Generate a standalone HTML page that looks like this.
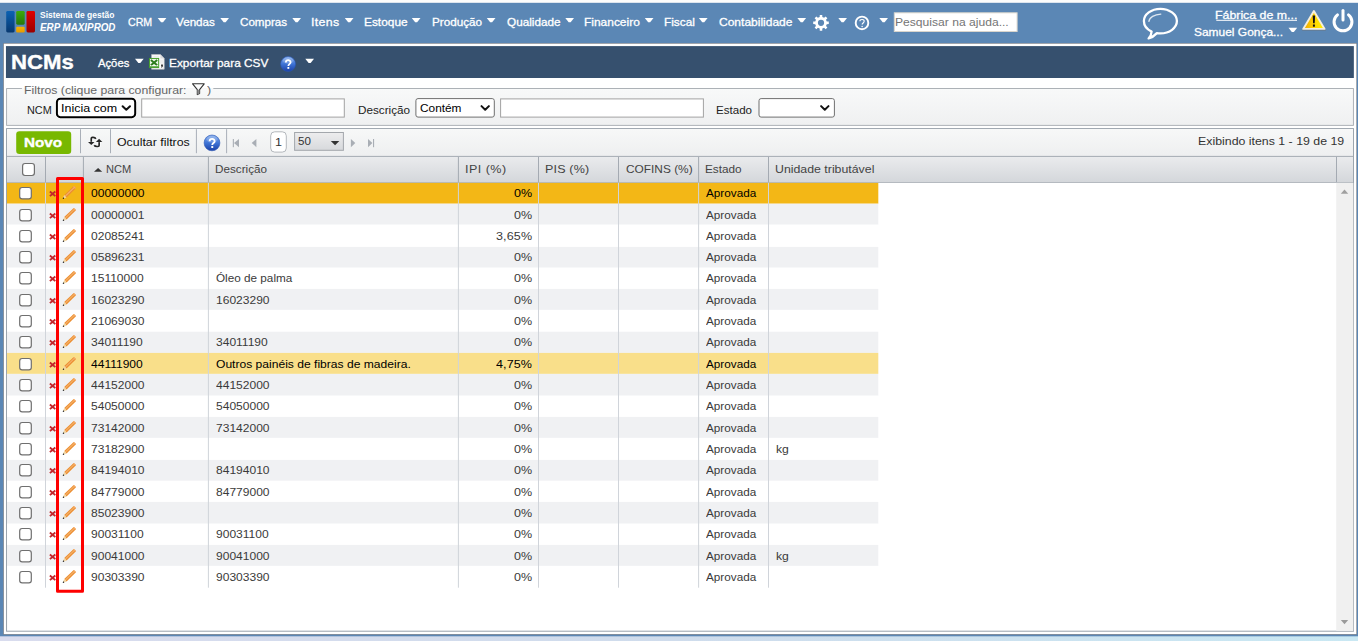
<!DOCTYPE html>
<html lang="pt-br"><head><meta charset="utf-8"><title>NCMs - ERP MAXIPROD</title>
<style>
html,body{margin:0;padding:0}
body{width:1358px;height:641px;overflow:hidden;position:relative;background:#5b87b5;font-family:"Liberation Sans", sans-serif}
#bg{position:absolute;left:0;top:0;width:1358px;height:641px;display:block}
.t{position:absolute;white-space:pre;font-family:"Liberation Sans", sans-serif}
</style></head><body>
<svg id="bg" width="1358" height="641" viewBox="0 0 1358 641">
<defs>
<linearGradient id="gB" x1="0" y1="0" x2="0" y2="1"><stop offset="0" stop-color="#0b62b4"/><stop offset="1" stop-color="#08386f"/></linearGradient>
<linearGradient id="gG" x1="0" y1="0" x2="0" y2="1"><stop offset="0" stop-color="#3cab0a"/><stop offset="1" stop-color="#27780a"/></linearGradient>
<linearGradient id="gY" x1="0" y1="0" x2="0" y2="1"><stop offset="0" stop-color="#f6b400"/><stop offset="1" stop-color="#e79a00"/></linearGradient>
<linearGradient id="gR" x1="0" y1="0" x2="0" y2="1"><stop offset="0" stop-color="#e00000"/><stop offset="1" stop-color="#9a0000"/></linearGradient>
<linearGradient id="gF" x1="0" y1="0" x2="0" y2="1"><stop offset="0" stop-color="#f8f9f9"/><stop offset="1" stop-color="#eff0f1"/></linearGradient>
<linearGradient id="gT" x1="0" y1="0" x2="0" y2="1"><stop offset="0" stop-color="#f7f8f8"/><stop offset="1" stop-color="#eeeff0"/></linearGradient>
<linearGradient id="gH" x1="0" y1="0" x2="0" y2="1"><stop offset="0" stop-color="#eaebed"/><stop offset="1" stop-color="#d4d7db"/></linearGradient>
<linearGradient id="gS" x1="0" y1="0" x2="0" y2="1"><stop offset="0" stop-color="#ededee"/><stop offset="1" stop-color="#d7d9dc"/></linearGradient>
<linearGradient id="gBot" x1="0" y1="0" x2="1" y2="0"><stop offset="0" stop-color="#d9dcee"/><stop offset="0.5" stop-color="#cfdcec"/><stop offset="1" stop-color="#c9e8f3"/></linearGradient>
<linearGradient id="gQ" x1="0" y1="0" x2="0" y2="1"><stop offset="0" stop-color="#86afee"/><stop offset="0.5" stop-color="#3f74d6"/><stop offset="1" stop-color="#1b40a6"/></linearGradient>
<linearGradient id="gW" x1="0" y1="0" x2="1" y2="0"><stop offset="0" stop-color="#f2a500"/><stop offset="0.55" stop-color="#ffd800"/><stop offset="1" stop-color="#fff200"/></linearGradient>
</defs>
<rect x="0" y="0" width="1358" height="641" fill="#5b87b5"/>
<rect x="0" y="0" width="1358" height="2.8" fill="#fdfdfc"/>
<rect x="0" y="633.5" width="1358" height="3.2" fill="#5b87b5"/>
<rect x="0" y="636.3" width="1358" height="4.7" fill="url(#gBot)"/>
<rect x="3.2" y="43.1" width="1353.7" height="591.6" fill="#7d7f84"/>
<rect x="3.85" y="43.7" width="1352.5" height="590.4" fill="#ffffff"/>
<rect x="6.2" y="10.9" width="8.4" height="21.6" rx="1.4" fill="url(#gB)"/>
<rect x="16.2" y="10.9" width="8.5" height="13.8" rx="1.4" fill="url(#gG)"/>
<rect x="16.2" y="26.7" width="8.5" height="5.8" rx="1.2" fill="url(#gY)"/>
<rect x="26.5" y="10.9" width="8.5" height="21.6" rx="1.4" fill="url(#gR)"/>
<g transform="translate(158,18)"><path d="M-0.3 0.05 L8.4 0.05 L5.05 4.3 L3.05 4.3 Z" fill="#fff"/></g>
<g transform="translate(220.6,18)"><path d="M-0.3 0.05 L8.4 0.05 L5.05 4.3 L3.05 4.3 Z" fill="#fff"/></g>
<g transform="translate(292.6,18)"><path d="M-0.3 0.05 L8.4 0.05 L5.05 4.3 L3.05 4.3 Z" fill="#fff"/></g>
<g transform="translate(345.1,18)"><path d="M-0.3 0.05 L8.4 0.05 L5.05 4.3 L3.05 4.3 Z" fill="#fff"/></g>
<g transform="translate(412.1,18)"><path d="M-0.3 0.05 L8.4 0.05 L5.05 4.3 L3.05 4.3 Z" fill="#fff"/></g>
<g transform="translate(487.1,18)"><path d="M-0.3 0.05 L8.4 0.05 L5.05 4.3 L3.05 4.3 Z" fill="#fff"/></g>
<g transform="translate(565.6,18)"><path d="M-0.3 0.05 L8.4 0.05 L5.05 4.3 L3.05 4.3 Z" fill="#fff"/></g>
<g transform="translate(645.1,18)"><path d="M-0.3 0.05 L8.4 0.05 L5.05 4.3 L3.05 4.3 Z" fill="#fff"/></g>
<g transform="translate(699.2,18)"><path d="M-0.3 0.05 L8.4 0.05 L5.05 4.3 L3.05 4.3 Z" fill="#fff"/></g>
<g transform="translate(797.7,18)"><path d="M-0.3 0.05 L8.4 0.05 L5.05 4.3 L3.05 4.3 Z" fill="#fff"/></g>
<g transform="translate(838.6,18)"><path d="M-0.3 0.05 L8.4 0.05 L5.05 4.3 L3.05 4.3 Z" fill="#fff"/></g>
<g transform="translate(879.6,18)"><path d="M-0.3 0.05 L8.4 0.05 L5.05 4.3 L3.05 4.3 Z" fill="#fff"/></g>
<path d="M819.76 15.05 L822.24 15.05 L822.33 17.10 L824.12 17.84 L825.64 16.46 L827.39 18.21 L826.01 19.73 L826.75 21.52 L828.80 21.61 L828.80 24.09 L826.75 24.18 L826.01 25.97 L827.39 27.49 L825.64 29.24 L824.12 27.86 L822.33 28.60 L822.24 30.65 L819.76 30.65 L819.67 28.60 L817.88 27.86 L816.36 29.24 L814.61 27.49 L815.99 25.97 L815.25 24.18 L813.20 24.09 L813.20 21.61 L815.25 21.52 L815.99 19.73 L814.61 18.21 L816.36 16.46 L817.88 17.84 L819.67 17.10 Z M824.10 22.85 A3.1 3.1 0 1 0 817.90 22.85 A3.1 3.1 0 1 0 824.10 22.85 Z" fill="#fff" fill-rule="evenodd"/>
<circle cx="862" cy="22.9" r="6.3" fill="none" stroke="#fff" stroke-width="1.9"/>
<path d="M859.9 21.3 C859.9 18.9 864.2 18.9 864.2 21.3 C864.2 22.9 862.1 23.0 862.1 24.6" fill="none" stroke="#fff" stroke-width="1.1"/><circle cx="862.1" cy="26.4" r="0.75" fill="#fff"/>
<rect x="894.3" y="12.8" width="122.8" height="18.7" fill="#fff" stroke="#d9d5cd" stroke-width="1"/>
<path d="M1151.6 31.6 C1146.6 29.3 1143.9 25.5 1143.9 21.1 C1143.9 14.3 1151.3 8.8 1160.4 8.8 C1169.5 8.8 1176.9 14.3 1176.9 21.1 C1176.9 27.9 1169.5 33.4 1160.4 33.4 C1159.2 33.4 1158.0 33.3 1156.9 33.1 C1154.6 35.6 1151.6 37.6 1148.6 38.4 C1150.4 36.4 1151.6 34.0 1151.6 31.6 Z" fill="none" stroke="#fff" stroke-width="2.3" stroke-linejoin="round"/>
<path d="M1148.9 21.4 C1149.3 17.4 1154.5 14.4 1160.8 14.1" fill="none" stroke="#fff" stroke-opacity=".8" stroke-width="1.3" stroke-linecap="round"/>
<rect x="1216.3" y="19.8" width="80.7" height="1" fill="#fff"/>
<g transform="translate(1288.8,27.8)"><path d="M-0.3 0.05 L8.4 0.05 L5.05 4.3 L3.05 4.3 Z" fill="#fff"/></g>
<path d="M1302.4 29.3 L1325.6 29.3 L1325.9 30.6 L1302.1 30.6 Z" fill="#6f7378" opacity=".85"/>
<path d="M1313.9 11.0 L1324.6 28.9 L1303.2 28.9 Z" fill="url(#gW)" stroke="#f4eedd" stroke-width="1.9" stroke-linejoin="round"/>
<path d="M1312.7 15.4 L1315.1 15.4 L1314.7 23.3 L1313.1 23.3 Z" fill="#111"/><rect x="1312.9" y="24.5" width="2" height="2.2" fill="#111"/>
<path d="M1348.51 14.85 A8.95 8.95 0 1 1 1337.49 14.85" fill="none" stroke="#fff" stroke-width="3" stroke-linecap="round"/>
<path d="M1343 10.6 L1343 19.9" stroke="#fff" stroke-width="3" stroke-linecap="round"/>
<rect x="5.95" y="46.1" width="1347.9" height="31.9" fill="#36506e"/>
<g transform="translate(135.3,58.7)"><path d="M-0.3 0.05 L8.4 0.05 L5.05 4.3 L3.05 4.3 Z" fill="#fff"/></g>
<g transform="translate(305.6,58.7)"><path d="M-0.3 0.05 L8.4 0.05 L5.05 4.3 L3.05 4.3 Z" fill="#fff"/></g>
<path d="M151.6 54.5 L160.4 54.5 L164.2 58.4 L164.2 69.2 L151.6 69.2 Z" fill="#fbfbfb" stroke="#b9bcc0" stroke-width=".7"/>
<path d="M160.4 54.5 L160.4 58.4 L164.2 58.4 Z" fill="#d9dadc"/>
<rect x="153.2" y="55.8" width="6" height="1.6" fill="#ececec"/>
<rect x="159.6" y="59.6" width="3.4" height="4.2" fill="#ededed"/>
<path d="M161.1 64.4 L162.9 64.4 L162.9 66.2 L162.0 67.5 L161.0 67.5 L161.7 66.3 L161.1 66.3 Z" fill="#2a2a2a"/>
<rect x="149.45" y="58.45" width="9.2" height="9.1" fill="#eef7ea" stroke="#46a02c" stroke-width="1"/>
<path d="M150.9 59.9 L157.2 65.2 M157.2 59.9 L150.9 65.2" stroke="#2c7c1d" stroke-width="1.9"/>
<rect x="150" y="65.6" width="8.1" height="0.7" fill="#ffffff"/>
<rect x="150" y="66.3" width="8.1" height="0.9" fill="#3c9526"/>
<circle cx="288.1" cy="64.0" r="7.5" fill="url(#gQ)" stroke="#2a56b4" stroke-width=".6"/>
<ellipse cx="288.1" cy="60.625" rx="5.25" ry="3.15" fill="#fff" opacity=".18"/>
<g transform="translate(288.1,64.0) scale(0.8333333333333334)"><path d="M-2.7 -1.9 C-2.7 -5.4 3.0 -5.4 3.0 -2.0 C3.0 0.2 0.3 0.2 0.3 2.3" fill="none" stroke="#fff" stroke-width="2.1"/><rect x="-0.8" y="3.6" width="2.2" height="2.2" fill="#fff"/></g>
<rect x="6.6" y="88.55" width="1346.8" height="36.8" fill="url(#gF)" stroke="#a4a9af" stroke-width="0.9"/>
<rect x="21.9" y="87.5" width="191.4" height="1.4" fill="#ffffff"/>
<rect x="21.9" y="88.9" width="191.4" height="1" fill="#f8f8f8"/>
<path d="M192.6 83.8 L204.2 83.8 L199.6 89.6 L199.6 93.6 L197.3 94.6 L197.3 89.6 Z" fill="#fdfdfd" stroke="#333" stroke-width="1.1" stroke-linejoin="round"/>
<path d="M197.4 89.8 L199.5 89.8 L199.5 93.5 L197.4 94.4 Z" fill="#888"/>
<rect x="56.9" y="98.75" width="78.3" height="18.4" rx="3.6" fill="#fff" stroke="#fff" stroke-width="3.4"/>
<rect x="56.9" y="98.75" width="78.3" height="18.4" rx="3.4" fill="#fff" stroke="#000" stroke-width="2"/>
<g transform="translate(121.7,105.2)"><path d="M0.9 1 L4.6 4.6 L8.3 1" fill="none" stroke="#111" stroke-width="2" stroke-linecap="round" stroke-linejoin="round"/></g>
<rect x="141.7" y="98.9" width="202.6" height="18.2" fill="#fff" stroke="#a2a2a2" stroke-width="1"/>
<rect x="415.9" y="98.6" width="78.4" height="18.5" rx="2.1" fill="#fff" stroke="#6f6f6f" stroke-width="1"/>
<g transform="translate(480.6,105.1)"><path d="M0.9 1 L4.6 4.6 L8.3 1" fill="none" stroke="#111" stroke-width="2" stroke-linecap="round" stroke-linejoin="round"/></g>
<rect x="500.6" y="98.9" width="202.8" height="18.2" fill="#fff" stroke="#a2a2a2" stroke-width="1"/>
<rect x="759" y="98.6" width="75.4" height="18.5" rx="2.1" fill="#fff" stroke="#6f6f6f" stroke-width="1"/>
<g transform="translate(820.2,105.1)"><path d="M0.9 1 L4.6 4.6 L8.3 1" fill="none" stroke="#111" stroke-width="2" stroke-linecap="round" stroke-linejoin="round"/></g>
<rect x="6.55" y="128.6" width="1346.9" height="502.6" fill="#fff" stroke="#98a1ab" stroke-width="1"/>
<rect x="7" y="129.05" width="1346" height="27" fill="url(#gT)"/>
<rect x="16.2" y="131.3" width="55" height="22.7" rx="3.2" fill="#78b800"/>
<rect x="80.0" y="129.2" width="1" height="24" fill="#a9afb8"/>
<rect x="110.0" y="129.2" width="1" height="24" fill="#a9afb8"/>
<rect x="195.9" y="129.2" width="1" height="24" fill="#a9afb8"/>
<rect x="226.1" y="129.2" width="1" height="24" fill="#a9afb8"/>
<g fill="none" stroke="#ffffff" stroke-opacity=".7" stroke-width="3.2" stroke-linejoin="round"><path d="M95.8 138.9 C95.3 137.6 94.6 137.4 93.2 137.4 L92.4 137.4 C91.6 137.4 91.25 137.8 91.25 138.6 L91.25 142.2"/><path d="M94.2 145.3 C94.8 146.3 95.6 146.5 97 146.5 L98 146.5 C98.8 146.5 99.15 146.1 99.15 145.3 L99.15 141.6"/></g>
<g fill="none" stroke="#262626" stroke-width="1.7"><path d="M95.8 138.9 C95.3 137.6 94.6 137.4 93.2 137.4 L92.4 137.4 C91.6 137.4 91.25 137.8 91.25 138.6 L91.25 142.2"/><path d="M94.2 145.3 C94.8 146.3 95.6 146.5 97 146.5 L98 146.5 C98.8 146.5 99.15 146.1 99.15 145.3 L99.15 141.6"/></g>
<path d="M88 142 L94.5 142 L91.25 145 Z" fill="#262626" stroke="#fff" stroke-opacity=".6" stroke-width=".6" paint-order="stroke"/>
<path d="M95.9 141.9 L102.3 141.9 L99.1 138.8 Z" fill="#262626" stroke="#fff" stroke-opacity=".6" stroke-width=".6" paint-order="stroke"/>
<circle cx="212" cy="142.9" r="7.9" fill="url(#gQ)" stroke="#2a56b4" stroke-width=".6"/>
<ellipse cx="212" cy="139.345" rx="5.53" ry="3.318" fill="#fff" opacity=".18"/>
<g transform="translate(212,142.9) scale(0.8777777777777778)"><path d="M-2.7 -1.9 C-2.7 -5.4 3.0 -5.4 3.0 -2.0 C3.0 0.2 0.3 0.2 0.3 2.3" fill="none" stroke="#fff" stroke-width="2.1"/><rect x="-0.8" y="3.6" width="2.2" height="2.2" fill="#fff"/></g>
<rect x="232.8" y="139" width="1.1" height="8.2" fill="#a9aeb5"/><path d="M239 139 L239 147.2 L234 143.1 Z" fill="#a9aeb5"/>
<path d="M256.4 139 L256.4 147.2 L251.7 143.1 Z" fill="#a9aeb5"/>
<rect x="270.7" y="131.8" width="15.6" height="20.3" rx="4" fill="#fff" stroke="#b4b8bd" stroke-width="1"/>
<rect x="294.6" y="132.5" width="48.8" height="17.8" fill="url(#gS)" stroke="#a3a7ac" stroke-width="1"/>
<path d="M330.8 141.1 L339.3 141.1 L335.05 145.3 Z" fill="#333"/>
<path d="M350.9 139 L350.9 147.2 L355.3 143.1 Z" fill="#a9aeb5"/>
<path d="M368 139 L368 147.2 L372.4 143.1 Z" fill="#a9aeb5"/><rect x="373" y="139" width="1.1" height="8.2" fill="#a9aeb5"/>
<rect x="7" y="156.9" width="1346" height="25.2" fill="url(#gH)"/>
<rect x="7" y="155.9" width="1346" height="1" fill="#a4aab2"/>
<rect x="7" y="182.1" width="1346" height="0.8" fill="#a4aab2"/>
<rect x="45.0" y="156.9" width="1" height="25.3" fill="#a4aab2"/>
<rect x="82.9" y="156.9" width="1" height="25.3" fill="#a4aab2"/>
<rect x="207.9" y="156.9" width="1" height="25.3" fill="#a4aab2"/>
<rect x="457.9" y="156.9" width="1" height="25.3" fill="#a4aab2"/>
<rect x="538.0" y="156.9" width="1" height="25.3" fill="#a4aab2"/>
<rect x="618.0" y="156.9" width="1" height="25.3" fill="#a4aab2"/>
<rect x="698.1" y="156.9" width="1" height="25.3" fill="#a4aab2"/>
<rect x="768.0" y="156.9" width="1" height="25.3" fill="#a4aab2"/>
<rect x="1336.0" y="156.9" width="1" height="25.3" fill="#a4aab2"/>
<rect x="22.6" y="163.5" width="11.8" height="12" rx="2.4" fill="#fff" stroke="#6f6f6f" stroke-width="1.2"/>
<path d="M94 171.8 L102.2 171.8 L98.1 167.9 Z" fill="#333"/>
<rect x="7" y="182.90" width="871.3" height="20.80" fill="#f3b716"/>
<rect x="7" y="203.70" width="871.3" height="21.00" fill="#f0f1f3"/>
<rect x="7" y="224.70" width="871.3" height="22.20" fill="#ffffff"/>
<rect x="7" y="246.90" width="871.3" height="20.80" fill="#f0f1f3"/>
<rect x="7" y="267.70" width="871.3" height="21.20" fill="#ffffff"/>
<rect x="7" y="288.90" width="871.3" height="21.00" fill="#f0f1f3"/>
<rect x="7" y="309.90" width="871.3" height="21.80" fill="#ffffff"/>
<rect x="7" y="331.70" width="871.3" height="21.20" fill="#f0f1f3"/>
<rect x="7" y="352.90" width="871.3" height="21.00" fill="#f9df8a"/>
<rect x="7" y="373.90" width="871.3" height="21.80" fill="#f0f1f3"/>
<rect x="7" y="395.70" width="871.3" height="21.20" fill="#ffffff"/>
<rect x="7" y="416.90" width="871.3" height="21.00" fill="#f0f1f3"/>
<rect x="7" y="437.90" width="871.3" height="22.00" fill="#ffffff"/>
<rect x="7" y="459.90" width="871.3" height="20.90" fill="#f0f1f3"/>
<rect x="7" y="480.80" width="871.3" height="21.10" fill="#ffffff"/>
<rect x="7" y="501.90" width="871.3" height="21.80" fill="#f0f1f3"/>
<rect x="7" y="523.70" width="871.3" height="21.20" fill="#ffffff"/>
<rect x="7" y="544.90" width="871.3" height="21.00" fill="#f0f1f3"/>
<rect x="7" y="565.90" width="871.3" height="21.80" fill="#ffffff"/>
<rect x="45.0" y="182.9" width="1" height="404.80" fill="#d0d4da"/>
<rect x="82.9" y="182.9" width="1" height="404.80" fill="#d0d4da"/>
<rect x="207.9" y="182.9" width="1" height="404.80" fill="#d0d4da"/>
<rect x="457.9" y="182.9" width="1" height="404.80" fill="#d0d4da"/>
<rect x="538.0" y="182.9" width="1" height="404.80" fill="#d0d4da"/>
<rect x="618.0" y="182.9" width="1" height="404.80" fill="#d0d4da"/>
<rect x="698.1" y="182.9" width="1" height="404.80" fill="#d0d4da"/>
<rect x="768.0" y="182.9" width="1" height="404.80" fill="#d0d4da"/>
<g transform="translate(19.1,186.90)"><rect x="0.6" y="0.6" width="11.6" height="11.3" rx="2.4" ry="2.4" fill="#fff" stroke="#6f6f6f" stroke-width="1.2"/></g>
<g transform="translate(49.1,190.75)"><path d="M0.8 0.8 L6.2 5.4 M6.2 0.8 L0.8 5.4" stroke="#c3262c" stroke-width="1.9" stroke-linecap="butt" fill="none"/></g>
<g transform="translate(62.6,186.05)"><path d="M1.62 9.07 L10.84 0.11 L11.55 0.12 L13.15 1.78 L13.14 2.48 L3.92 11.44 Z" fill="#ec8f33"/>
 <path d="M2.35 9.82 L11.93 0.52 L12.59 1.20 L3.01 10.50 Z" fill="#f7bd7c" opacity=".8"/>
 <path d="M10.27 0.67 L10.84 0.11 L11.55 0.12 L13.15 1.78 L13.14 2.48 L12.57 3.04 Z" fill="#f4ad69" opacity=".85"/>
 <path d="M1.62 9.07 L3.92 11.44 L1.55 12.55 L0.55 11.45 Z" fill="#f0d5a2"/>
 <path d="M0.91 11.21 L1.75 12.08 L0.33 12.62 Z" fill="#1d1d1d"/>
 <circle cx="0.76" cy="12.20" r="0.62" fill="#1d1d1d"/></g>
<g transform="translate(19.1,208.90)"><rect x="0.6" y="0.6" width="11.6" height="11.3" rx="2.4" ry="2.4" fill="#fff" stroke="#6f6f6f" stroke-width="1.2"/></g>
<g transform="translate(49.1,212.75)"><path d="M0.8 0.8 L6.2 5.4 M6.2 0.8 L0.8 5.4" stroke="#c3262c" stroke-width="1.9" stroke-linecap="butt" fill="none"/></g>
<g transform="translate(62.6,208.05)"><path d="M1.62 9.07 L10.84 0.11 L11.55 0.12 L13.15 1.78 L13.14 2.48 L3.92 11.44 Z" fill="#ec8f33"/>
 <path d="M2.35 9.82 L11.93 0.52 L12.59 1.20 L3.01 10.50 Z" fill="#f7bd7c" opacity=".8"/>
 <path d="M10.27 0.67 L10.84 0.11 L11.55 0.12 L13.15 1.78 L13.14 2.48 L12.57 3.04 Z" fill="#f4ad69" opacity=".85"/>
 <path d="M1.62 9.07 L3.92 11.44 L1.55 12.55 L0.55 11.45 Z" fill="#f0d5a2"/>
 <path d="M0.91 11.21 L1.75 12.08 L0.33 12.62 Z" fill="#1d1d1d"/>
 <circle cx="0.76" cy="12.20" r="0.62" fill="#1d1d1d"/></g>
<g transform="translate(19.1,229.90)"><rect x="0.6" y="0.6" width="11.6" height="11.3" rx="2.4" ry="2.4" fill="#fff" stroke="#6f6f6f" stroke-width="1.2"/></g>
<g transform="translate(49.1,233.75)"><path d="M0.8 0.8 L6.2 5.4 M6.2 0.8 L0.8 5.4" stroke="#c3262c" stroke-width="1.9" stroke-linecap="butt" fill="none"/></g>
<g transform="translate(62.6,229.05)"><path d="M1.62 9.07 L10.84 0.11 L11.55 0.12 L13.15 1.78 L13.14 2.48 L3.92 11.44 Z" fill="#ec8f33"/>
 <path d="M2.35 9.82 L11.93 0.52 L12.59 1.20 L3.01 10.50 Z" fill="#f7bd7c" opacity=".8"/>
 <path d="M10.27 0.67 L10.84 0.11 L11.55 0.12 L13.15 1.78 L13.14 2.48 L12.57 3.04 Z" fill="#f4ad69" opacity=".85"/>
 <path d="M1.62 9.07 L3.92 11.44 L1.55 12.55 L0.55 11.45 Z" fill="#f0d5a2"/>
 <path d="M0.91 11.21 L1.75 12.08 L0.33 12.62 Z" fill="#1d1d1d"/>
 <circle cx="0.76" cy="12.20" r="0.62" fill="#1d1d1d"/></g>
<g transform="translate(19.1,250.90)"><rect x="0.6" y="0.6" width="11.6" height="11.3" rx="2.4" ry="2.4" fill="#fff" stroke="#6f6f6f" stroke-width="1.2"/></g>
<g transform="translate(49.1,254.75)"><path d="M0.8 0.8 L6.2 5.4 M6.2 0.8 L0.8 5.4" stroke="#c3262c" stroke-width="1.9" stroke-linecap="butt" fill="none"/></g>
<g transform="translate(62.6,250.05)"><path d="M1.62 9.07 L10.84 0.11 L11.55 0.12 L13.15 1.78 L13.14 2.48 L3.92 11.44 Z" fill="#ec8f33"/>
 <path d="M2.35 9.82 L11.93 0.52 L12.59 1.20 L3.01 10.50 Z" fill="#f7bd7c" opacity=".8"/>
 <path d="M10.27 0.67 L10.84 0.11 L11.55 0.12 L13.15 1.78 L13.14 2.48 L12.57 3.04 Z" fill="#f4ad69" opacity=".85"/>
 <path d="M1.62 9.07 L3.92 11.44 L1.55 12.55 L0.55 11.45 Z" fill="#f0d5a2"/>
 <path d="M0.91 11.21 L1.75 12.08 L0.33 12.62 Z" fill="#1d1d1d"/>
 <circle cx="0.76" cy="12.20" r="0.62" fill="#1d1d1d"/></g>
<g transform="translate(19.1,271.90)"><rect x="0.6" y="0.6" width="11.6" height="11.3" rx="2.4" ry="2.4" fill="#fff" stroke="#6f6f6f" stroke-width="1.2"/></g>
<g transform="translate(49.1,275.75)"><path d="M0.8 0.8 L6.2 5.4 M6.2 0.8 L0.8 5.4" stroke="#c3262c" stroke-width="1.9" stroke-linecap="butt" fill="none"/></g>
<g transform="translate(62.6,271.05)"><path d="M1.62 9.07 L10.84 0.11 L11.55 0.12 L13.15 1.78 L13.14 2.48 L3.92 11.44 Z" fill="#ec8f33"/>
 <path d="M2.35 9.82 L11.93 0.52 L12.59 1.20 L3.01 10.50 Z" fill="#f7bd7c" opacity=".8"/>
 <path d="M10.27 0.67 L10.84 0.11 L11.55 0.12 L13.15 1.78 L13.14 2.48 L12.57 3.04 Z" fill="#f4ad69" opacity=".85"/>
 <path d="M1.62 9.07 L3.92 11.44 L1.55 12.55 L0.55 11.45 Z" fill="#f0d5a2"/>
 <path d="M0.91 11.21 L1.75 12.08 L0.33 12.62 Z" fill="#1d1d1d"/>
 <circle cx="0.76" cy="12.20" r="0.62" fill="#1d1d1d"/></g>
<g transform="translate(19.1,293.90)"><rect x="0.6" y="0.6" width="11.6" height="11.3" rx="2.4" ry="2.4" fill="#fff" stroke="#6f6f6f" stroke-width="1.2"/></g>
<g transform="translate(49.1,297.75)"><path d="M0.8 0.8 L6.2 5.4 M6.2 0.8 L0.8 5.4" stroke="#c3262c" stroke-width="1.9" stroke-linecap="butt" fill="none"/></g>
<g transform="translate(62.6,293.05)"><path d="M1.62 9.07 L10.84 0.11 L11.55 0.12 L13.15 1.78 L13.14 2.48 L3.92 11.44 Z" fill="#ec8f33"/>
 <path d="M2.35 9.82 L11.93 0.52 L12.59 1.20 L3.01 10.50 Z" fill="#f7bd7c" opacity=".8"/>
 <path d="M10.27 0.67 L10.84 0.11 L11.55 0.12 L13.15 1.78 L13.14 2.48 L12.57 3.04 Z" fill="#f4ad69" opacity=".85"/>
 <path d="M1.62 9.07 L3.92 11.44 L1.55 12.55 L0.55 11.45 Z" fill="#f0d5a2"/>
 <path d="M0.91 11.21 L1.75 12.08 L0.33 12.62 Z" fill="#1d1d1d"/>
 <circle cx="0.76" cy="12.20" r="0.62" fill="#1d1d1d"/></g>
<g transform="translate(19.1,314.90)"><rect x="0.6" y="0.6" width="11.6" height="11.3" rx="2.4" ry="2.4" fill="#fff" stroke="#6f6f6f" stroke-width="1.2"/></g>
<g transform="translate(49.1,318.75)"><path d="M0.8 0.8 L6.2 5.4 M6.2 0.8 L0.8 5.4" stroke="#c3262c" stroke-width="1.9" stroke-linecap="butt" fill="none"/></g>
<g transform="translate(62.6,314.05)"><path d="M1.62 9.07 L10.84 0.11 L11.55 0.12 L13.15 1.78 L13.14 2.48 L3.92 11.44 Z" fill="#ec8f33"/>
 <path d="M2.35 9.82 L11.93 0.52 L12.59 1.20 L3.01 10.50 Z" fill="#f7bd7c" opacity=".8"/>
 <path d="M10.27 0.67 L10.84 0.11 L11.55 0.12 L13.15 1.78 L13.14 2.48 L12.57 3.04 Z" fill="#f4ad69" opacity=".85"/>
 <path d="M1.62 9.07 L3.92 11.44 L1.55 12.55 L0.55 11.45 Z" fill="#f0d5a2"/>
 <path d="M0.91 11.21 L1.75 12.08 L0.33 12.62 Z" fill="#1d1d1d"/>
 <circle cx="0.76" cy="12.20" r="0.62" fill="#1d1d1d"/></g>
<g transform="translate(19.1,335.90)"><rect x="0.6" y="0.6" width="11.6" height="11.3" rx="2.4" ry="2.4" fill="#fff" stroke="#6f6f6f" stroke-width="1.2"/></g>
<g transform="translate(49.1,339.75)"><path d="M0.8 0.8 L6.2 5.4 M6.2 0.8 L0.8 5.4" stroke="#c3262c" stroke-width="1.9" stroke-linecap="butt" fill="none"/></g>
<g transform="translate(62.6,335.05)"><path d="M1.62 9.07 L10.84 0.11 L11.55 0.12 L13.15 1.78 L13.14 2.48 L3.92 11.44 Z" fill="#ec8f33"/>
 <path d="M2.35 9.82 L11.93 0.52 L12.59 1.20 L3.01 10.50 Z" fill="#f7bd7c" opacity=".8"/>
 <path d="M10.27 0.67 L10.84 0.11 L11.55 0.12 L13.15 1.78 L13.14 2.48 L12.57 3.04 Z" fill="#f4ad69" opacity=".85"/>
 <path d="M1.62 9.07 L3.92 11.44 L1.55 12.55 L0.55 11.45 Z" fill="#f0d5a2"/>
 <path d="M0.91 11.21 L1.75 12.08 L0.33 12.62 Z" fill="#1d1d1d"/>
 <circle cx="0.76" cy="12.20" r="0.62" fill="#1d1d1d"/></g>
<g transform="translate(19.1,357.90)"><rect x="0.6" y="0.6" width="11.6" height="11.3" rx="2.4" ry="2.4" fill="#fff" stroke="#6f6f6f" stroke-width="1.2"/></g>
<g transform="translate(49.1,361.75)"><path d="M0.8 0.8 L6.2 5.4 M6.2 0.8 L0.8 5.4" stroke="#c3262c" stroke-width="1.9" stroke-linecap="butt" fill="none"/></g>
<g transform="translate(62.6,357.05)"><path d="M1.62 9.07 L10.84 0.11 L11.55 0.12 L13.15 1.78 L13.14 2.48 L3.92 11.44 Z" fill="#ec8f33"/>
 <path d="M2.35 9.82 L11.93 0.52 L12.59 1.20 L3.01 10.50 Z" fill="#f7bd7c" opacity=".8"/>
 <path d="M10.27 0.67 L10.84 0.11 L11.55 0.12 L13.15 1.78 L13.14 2.48 L12.57 3.04 Z" fill="#f4ad69" opacity=".85"/>
 <path d="M1.62 9.07 L3.92 11.44 L1.55 12.55 L0.55 11.45 Z" fill="#f0d5a2"/>
 <path d="M0.91 11.21 L1.75 12.08 L0.33 12.62 Z" fill="#1d1d1d"/>
 <circle cx="0.76" cy="12.20" r="0.62" fill="#1d1d1d"/></g>
<g transform="translate(19.1,378.90)"><rect x="0.6" y="0.6" width="11.6" height="11.3" rx="2.4" ry="2.4" fill="#fff" stroke="#6f6f6f" stroke-width="1.2"/></g>
<g transform="translate(49.1,382.75)"><path d="M0.8 0.8 L6.2 5.4 M6.2 0.8 L0.8 5.4" stroke="#c3262c" stroke-width="1.9" stroke-linecap="butt" fill="none"/></g>
<g transform="translate(62.6,378.05)"><path d="M1.62 9.07 L10.84 0.11 L11.55 0.12 L13.15 1.78 L13.14 2.48 L3.92 11.44 Z" fill="#ec8f33"/>
 <path d="M2.35 9.82 L11.93 0.52 L12.59 1.20 L3.01 10.50 Z" fill="#f7bd7c" opacity=".8"/>
 <path d="M10.27 0.67 L10.84 0.11 L11.55 0.12 L13.15 1.78 L13.14 2.48 L12.57 3.04 Z" fill="#f4ad69" opacity=".85"/>
 <path d="M1.62 9.07 L3.92 11.44 L1.55 12.55 L0.55 11.45 Z" fill="#f0d5a2"/>
 <path d="M0.91 11.21 L1.75 12.08 L0.33 12.62 Z" fill="#1d1d1d"/>
 <circle cx="0.76" cy="12.20" r="0.62" fill="#1d1d1d"/></g>
<g transform="translate(19.1,399.90)"><rect x="0.6" y="0.6" width="11.6" height="11.3" rx="2.4" ry="2.4" fill="#fff" stroke="#6f6f6f" stroke-width="1.2"/></g>
<g transform="translate(49.1,403.75)"><path d="M0.8 0.8 L6.2 5.4 M6.2 0.8 L0.8 5.4" stroke="#c3262c" stroke-width="1.9" stroke-linecap="butt" fill="none"/></g>
<g transform="translate(62.6,399.05)"><path d="M1.62 9.07 L10.84 0.11 L11.55 0.12 L13.15 1.78 L13.14 2.48 L3.92 11.44 Z" fill="#ec8f33"/>
 <path d="M2.35 9.82 L11.93 0.52 L12.59 1.20 L3.01 10.50 Z" fill="#f7bd7c" opacity=".8"/>
 <path d="M10.27 0.67 L10.84 0.11 L11.55 0.12 L13.15 1.78 L13.14 2.48 L12.57 3.04 Z" fill="#f4ad69" opacity=".85"/>
 <path d="M1.62 9.07 L3.92 11.44 L1.55 12.55 L0.55 11.45 Z" fill="#f0d5a2"/>
 <path d="M0.91 11.21 L1.75 12.08 L0.33 12.62 Z" fill="#1d1d1d"/>
 <circle cx="0.76" cy="12.20" r="0.62" fill="#1d1d1d"/></g>
<g transform="translate(19.1,421.90)"><rect x="0.6" y="0.6" width="11.6" height="11.3" rx="2.4" ry="2.4" fill="#fff" stroke="#6f6f6f" stroke-width="1.2"/></g>
<g transform="translate(49.1,425.75)"><path d="M0.8 0.8 L6.2 5.4 M6.2 0.8 L0.8 5.4" stroke="#c3262c" stroke-width="1.9" stroke-linecap="butt" fill="none"/></g>
<g transform="translate(62.6,421.05)"><path d="M1.62 9.07 L10.84 0.11 L11.55 0.12 L13.15 1.78 L13.14 2.48 L3.92 11.44 Z" fill="#ec8f33"/>
 <path d="M2.35 9.82 L11.93 0.52 L12.59 1.20 L3.01 10.50 Z" fill="#f7bd7c" opacity=".8"/>
 <path d="M10.27 0.67 L10.84 0.11 L11.55 0.12 L13.15 1.78 L13.14 2.48 L12.57 3.04 Z" fill="#f4ad69" opacity=".85"/>
 <path d="M1.62 9.07 L3.92 11.44 L1.55 12.55 L0.55 11.45 Z" fill="#f0d5a2"/>
 <path d="M0.91 11.21 L1.75 12.08 L0.33 12.62 Z" fill="#1d1d1d"/>
 <circle cx="0.76" cy="12.20" r="0.62" fill="#1d1d1d"/></g>
<g transform="translate(19.1,442.90)"><rect x="0.6" y="0.6" width="11.6" height="11.3" rx="2.4" ry="2.4" fill="#fff" stroke="#6f6f6f" stroke-width="1.2"/></g>
<g transform="translate(49.1,446.75)"><path d="M0.8 0.8 L6.2 5.4 M6.2 0.8 L0.8 5.4" stroke="#c3262c" stroke-width="1.9" stroke-linecap="butt" fill="none"/></g>
<g transform="translate(62.6,442.05)"><path d="M1.62 9.07 L10.84 0.11 L11.55 0.12 L13.15 1.78 L13.14 2.48 L3.92 11.44 Z" fill="#ec8f33"/>
 <path d="M2.35 9.82 L11.93 0.52 L12.59 1.20 L3.01 10.50 Z" fill="#f7bd7c" opacity=".8"/>
 <path d="M10.27 0.67 L10.84 0.11 L11.55 0.12 L13.15 1.78 L13.14 2.48 L12.57 3.04 Z" fill="#f4ad69" opacity=".85"/>
 <path d="M1.62 9.07 L3.92 11.44 L1.55 12.55 L0.55 11.45 Z" fill="#f0d5a2"/>
 <path d="M0.91 11.21 L1.75 12.08 L0.33 12.62 Z" fill="#1d1d1d"/>
 <circle cx="0.76" cy="12.20" r="0.62" fill="#1d1d1d"/></g>
<g transform="translate(19.1,463.90)"><rect x="0.6" y="0.6" width="11.6" height="11.3" rx="2.4" ry="2.4" fill="#fff" stroke="#6f6f6f" stroke-width="1.2"/></g>
<g transform="translate(49.1,467.75)"><path d="M0.8 0.8 L6.2 5.4 M6.2 0.8 L0.8 5.4" stroke="#c3262c" stroke-width="1.9" stroke-linecap="butt" fill="none"/></g>
<g transform="translate(62.6,463.05)"><path d="M1.62 9.07 L10.84 0.11 L11.55 0.12 L13.15 1.78 L13.14 2.48 L3.92 11.44 Z" fill="#ec8f33"/>
 <path d="M2.35 9.82 L11.93 0.52 L12.59 1.20 L3.01 10.50 Z" fill="#f7bd7c" opacity=".8"/>
 <path d="M10.27 0.67 L10.84 0.11 L11.55 0.12 L13.15 1.78 L13.14 2.48 L12.57 3.04 Z" fill="#f4ad69" opacity=".85"/>
 <path d="M1.62 9.07 L3.92 11.44 L1.55 12.55 L0.55 11.45 Z" fill="#f0d5a2"/>
 <path d="M0.91 11.21 L1.75 12.08 L0.33 12.62 Z" fill="#1d1d1d"/>
 <circle cx="0.76" cy="12.20" r="0.62" fill="#1d1d1d"/></g>
<g transform="translate(19.1,485.90)"><rect x="0.6" y="0.6" width="11.6" height="11.3" rx="2.4" ry="2.4" fill="#fff" stroke="#6f6f6f" stroke-width="1.2"/></g>
<g transform="translate(49.1,489.75)"><path d="M0.8 0.8 L6.2 5.4 M6.2 0.8 L0.8 5.4" stroke="#c3262c" stroke-width="1.9" stroke-linecap="butt" fill="none"/></g>
<g transform="translate(62.6,485.05)"><path d="M1.62 9.07 L10.84 0.11 L11.55 0.12 L13.15 1.78 L13.14 2.48 L3.92 11.44 Z" fill="#ec8f33"/>
 <path d="M2.35 9.82 L11.93 0.52 L12.59 1.20 L3.01 10.50 Z" fill="#f7bd7c" opacity=".8"/>
 <path d="M10.27 0.67 L10.84 0.11 L11.55 0.12 L13.15 1.78 L13.14 2.48 L12.57 3.04 Z" fill="#f4ad69" opacity=".85"/>
 <path d="M1.62 9.07 L3.92 11.44 L1.55 12.55 L0.55 11.45 Z" fill="#f0d5a2"/>
 <path d="M0.91 11.21 L1.75 12.08 L0.33 12.62 Z" fill="#1d1d1d"/>
 <circle cx="0.76" cy="12.20" r="0.62" fill="#1d1d1d"/></g>
<g transform="translate(19.1,506.90)"><rect x="0.6" y="0.6" width="11.6" height="11.3" rx="2.4" ry="2.4" fill="#fff" stroke="#6f6f6f" stroke-width="1.2"/></g>
<g transform="translate(49.1,510.75)"><path d="M0.8 0.8 L6.2 5.4 M6.2 0.8 L0.8 5.4" stroke="#c3262c" stroke-width="1.9" stroke-linecap="butt" fill="none"/></g>
<g transform="translate(62.6,506.05)"><path d="M1.62 9.07 L10.84 0.11 L11.55 0.12 L13.15 1.78 L13.14 2.48 L3.92 11.44 Z" fill="#ec8f33"/>
 <path d="M2.35 9.82 L11.93 0.52 L12.59 1.20 L3.01 10.50 Z" fill="#f7bd7c" opacity=".8"/>
 <path d="M10.27 0.67 L10.84 0.11 L11.55 0.12 L13.15 1.78 L13.14 2.48 L12.57 3.04 Z" fill="#f4ad69" opacity=".85"/>
 <path d="M1.62 9.07 L3.92 11.44 L1.55 12.55 L0.55 11.45 Z" fill="#f0d5a2"/>
 <path d="M0.91 11.21 L1.75 12.08 L0.33 12.62 Z" fill="#1d1d1d"/>
 <circle cx="0.76" cy="12.20" r="0.62" fill="#1d1d1d"/></g>
<g transform="translate(19.1,527.90)"><rect x="0.6" y="0.6" width="11.6" height="11.3" rx="2.4" ry="2.4" fill="#fff" stroke="#6f6f6f" stroke-width="1.2"/></g>
<g transform="translate(49.1,531.75)"><path d="M0.8 0.8 L6.2 5.4 M6.2 0.8 L0.8 5.4" stroke="#c3262c" stroke-width="1.9" stroke-linecap="butt" fill="none"/></g>
<g transform="translate(62.6,527.05)"><path d="M1.62 9.07 L10.84 0.11 L11.55 0.12 L13.15 1.78 L13.14 2.48 L3.92 11.44 Z" fill="#ec8f33"/>
 <path d="M2.35 9.82 L11.93 0.52 L12.59 1.20 L3.01 10.50 Z" fill="#f7bd7c" opacity=".8"/>
 <path d="M10.27 0.67 L10.84 0.11 L11.55 0.12 L13.15 1.78 L13.14 2.48 L12.57 3.04 Z" fill="#f4ad69" opacity=".85"/>
 <path d="M1.62 9.07 L3.92 11.44 L1.55 12.55 L0.55 11.45 Z" fill="#f0d5a2"/>
 <path d="M0.91 11.21 L1.75 12.08 L0.33 12.62 Z" fill="#1d1d1d"/>
 <circle cx="0.76" cy="12.20" r="0.62" fill="#1d1d1d"/></g>
<g transform="translate(19.1,549.90)"><rect x="0.6" y="0.6" width="11.6" height="11.3" rx="2.4" ry="2.4" fill="#fff" stroke="#6f6f6f" stroke-width="1.2"/></g>
<g transform="translate(49.1,553.75)"><path d="M0.8 0.8 L6.2 5.4 M6.2 0.8 L0.8 5.4" stroke="#c3262c" stroke-width="1.9" stroke-linecap="butt" fill="none"/></g>
<g transform="translate(62.6,549.05)"><path d="M1.62 9.07 L10.84 0.11 L11.55 0.12 L13.15 1.78 L13.14 2.48 L3.92 11.44 Z" fill="#ec8f33"/>
 <path d="M2.35 9.82 L11.93 0.52 L12.59 1.20 L3.01 10.50 Z" fill="#f7bd7c" opacity=".8"/>
 <path d="M10.27 0.67 L10.84 0.11 L11.55 0.12 L13.15 1.78 L13.14 2.48 L12.57 3.04 Z" fill="#f4ad69" opacity=".85"/>
 <path d="M1.62 9.07 L3.92 11.44 L1.55 12.55 L0.55 11.45 Z" fill="#f0d5a2"/>
 <path d="M0.91 11.21 L1.75 12.08 L0.33 12.62 Z" fill="#1d1d1d"/>
 <circle cx="0.76" cy="12.20" r="0.62" fill="#1d1d1d"/></g>
<g transform="translate(19.1,570.90)"><rect x="0.6" y="0.6" width="11.6" height="11.3" rx="2.4" ry="2.4" fill="#fff" stroke="#6f6f6f" stroke-width="1.2"/></g>
<g transform="translate(49.1,574.75)"><path d="M0.8 0.8 L6.2 5.4 M6.2 0.8 L0.8 5.4" stroke="#c3262c" stroke-width="1.9" stroke-linecap="butt" fill="none"/></g>
<g transform="translate(62.6,570.05)"><path d="M1.62 9.07 L10.84 0.11 L11.55 0.12 L13.15 1.78 L13.14 2.48 L3.92 11.44 Z" fill="#ec8f33"/>
 <path d="M2.35 9.82 L11.93 0.52 L12.59 1.20 L3.01 10.50 Z" fill="#f7bd7c" opacity=".8"/>
 <path d="M10.27 0.67 L10.84 0.11 L11.55 0.12 L13.15 1.78 L13.14 2.48 L12.57 3.04 Z" fill="#f4ad69" opacity=".85"/>
 <path d="M1.62 9.07 L3.92 11.44 L1.55 12.55 L0.55 11.45 Z" fill="#f0d5a2"/>
 <path d="M0.91 11.21 L1.75 12.08 L0.33 12.62 Z" fill="#1d1d1d"/>
 <circle cx="0.76" cy="12.20" r="0.62" fill="#1d1d1d"/></g>
<rect x="1336.2" y="182.9" width="17.1" height="447.9" fill="#f0f0f0"/>
<path d="M1340.8 193.7 L1348.2 193.7 L1344.5 189.5 Z" fill="#a0a0a0"/>
<path d="M1340.8 620 L1348.2 620 L1344.5 624.3 Z" fill="#9a9a9a"/>
<rect x="57.5" y="178.5" width="25" height="412.7" fill="none" stroke="#fe0000" stroke-width="3" stroke-linejoin="round"/>
</svg>
<span class="t" style="left:39.91px;top:8.60px;line-height:12px;color:#fff;letter-spacing:0.000px;transform:scaleX(0.9637);transform-origin:0 0;font-size:8.8px;font-weight:700;">Sistema de gestão</span>
<span class="t" style="left:39.85px;top:20.00px;line-height:15px;color:#fff;letter-spacing:0.000px;transform:scaleX(0.9092);transform-origin:0 0;font-size:10.8px;font-weight:700;font-style:italic;">ERP MAXIPROD</span>
<span class="t" style="left:128.01px;top:15.10px;line-height:15px;color:#fff;letter-spacing:0.000px;transform:scaleX(0.9332);transform-origin:0 0;-webkit-text-stroke:0.3px #fff;font-size:11.4px;font-weight:400;">CRM</span>
<span class="t" style="left:176.32px;top:15.10px;line-height:15px;color:#fff;letter-spacing:0.000px;transform:scaleX(1.0243);transform-origin:0 0;-webkit-text-stroke:0.3px #fff;font-size:11.4px;font-weight:400;">Vendas</span>
<span class="t" style="left:240.28px;top:15.10px;line-height:15px;color:#fff;letter-spacing:0.000px;transform:scaleX(1.0192);transform-origin:0 0;-webkit-text-stroke:0.3px #fff;font-size:11.4px;font-weight:400;">Compras</span>
<span class="t" style="left:311.38px;top:15.10px;line-height:15px;color:#fff;letter-spacing:0.285px;transform:scaleX(1.0900);transform-origin:0 0;-webkit-text-stroke:0.3px #fff;font-size:11.4px;font-weight:400;">Itens</span>
<span class="t" style="left:363.51px;top:15.10px;line-height:15px;color:#fff;letter-spacing:0.000px;transform:scaleX(1.0430);transform-origin:0 0;-webkit-text-stroke:0.3px #fff;font-size:11.4px;font-weight:400;">Estoque</span>
<span class="t" style="left:431.53px;top:15.10px;line-height:15px;color:#fff;letter-spacing:-0.000px;transform:scaleX(1.0263);transform-origin:0 0;-webkit-text-stroke:0.3px #fff;font-size:11.4px;font-weight:400;">Produção</span>
<span class="t" style="left:506.69px;top:15.10px;line-height:15px;color:#fff;letter-spacing:0.000px;transform:scaleX(1.0313);transform-origin:0 0;-webkit-text-stroke:0.3px #fff;font-size:11.4px;font-weight:400;">Qualidade</span>
<span class="t" style="left:584.10px;top:15.10px;line-height:15px;color:#fff;letter-spacing:0.000px;transform:scaleX(1.0492);transform-origin:0 0;-webkit-text-stroke:0.3px #fff;font-size:11.4px;font-weight:400;">Financeiro</span>
<span class="t" style="left:663.51px;top:15.10px;line-height:15px;color:#fff;letter-spacing:0.000px;transform:scaleX(1.0387);transform-origin:0 0;-webkit-text-stroke:0.3px #fff;font-size:11.4px;font-weight:400;">Fiscal</span>
<span class="t" style="left:719.27px;top:15.10px;line-height:15px;color:#fff;letter-spacing:0.000px;transform:scaleX(1.0549);transform-origin:0 0;-webkit-text-stroke:0.3px #fff;font-size:11.4px;font-weight:400;">Contabilidade</span>
<span class="t" style="left:895.49px;top:15.20px;line-height:15px;color:#757575;letter-spacing:0.000px;transform:scaleX(1.0626);transform-origin:0 0;font-size:11.4px;font-weight:400;">Pesquisar na ajuda...</span>
<span class="t" style="left:1215.47px;top:7.50px;line-height:15px;color:#fff;letter-spacing:0.000px;transform:scaleX(1.0835);transform-origin:0 0;-webkit-text-stroke:0.3px #fff;font-size:11.4px;font-weight:400;">Fábrica de m...</span>
<span class="t" style="left:1194.01px;top:24.80px;line-height:15px;color:#fff;letter-spacing:0.000px;transform:scaleX(1.0490);transform-origin:0 0;-webkit-text-stroke:0.3px #fff;font-size:11.4px;font-weight:400;">Samuel Gonça...</span>
<span class="t" style="left:11.10px;top:48.00px;line-height:28px;color:#fff;letter-spacing:0.000px;transform:scaleX(1.0648);transform-origin:0 0;-webkit-text-stroke:0.4px #fff;font-size:20.8px;font-weight:700;">NCMs</span>
<span class="t" style="left:98.34px;top:55.70px;line-height:15px;color:#fff;letter-spacing:0.000px;transform:scaleX(0.9873);transform-origin:0 0;-webkit-text-stroke:0.3px #fff;font-size:11.4px;font-weight:400;">Ações</span>
<span class="t" style="left:169.01px;top:55.70px;line-height:15px;color:#fff;letter-spacing:0.000px;transform:scaleX(1.0393);transform-origin:0 0;-webkit-text-stroke:0.3px #fff;font-size:11.4px;font-weight:400;">Exportar para CSV</span>
<span class="t" style="left:23.58px;top:82.60px;line-height:15px;color:#666;letter-spacing:0.000px;transform:scaleX(1.0684);transform-origin:0 0;font-size:11.5px;font-weight:400;">Filtros (clique para configurar:</span>
<span class="t" style="left:207.33px;top:82.60px;line-height:15px;color:#666;letter-spacing:0.000px;transform:scaleX(1.0900);transform-origin:0 0;font-size:11.5px;font-weight:400;">)</span>
<span class="t" style="left:26.60px;top:103.10px;line-height:15px;color:#222;letter-spacing:0.000px;transform:scaleX(0.9438);transform-origin:0 0;font-size:11.5px;font-weight:400;">NCM</span>
<span class="t" style="left:60.59px;top:100.00px;line-height:16px;color:#000;letter-spacing:0.000px;transform:scaleX(1.0769);transform-origin:0 0;font-size:11.6px;font-weight:400;">Inicia com</span>
<span class="t" style="left:358.23px;top:102.90px;line-height:15px;color:#222;letter-spacing:0.000px;transform:scaleX(1.0190);transform-origin:0 0;font-size:11.5px;font-weight:400;">Descrição</span>
<span class="t" style="left:420.46px;top:99.80px;line-height:16px;color:#000;letter-spacing:0.000px;transform:scaleX(1.0217);transform-origin:0 0;font-size:11.6px;font-weight:400;">Contém</span>
<span class="t" style="left:716.45px;top:102.90px;line-height:15px;color:#222;letter-spacing:0.000px;transform:scaleX(1.0068);transform-origin:0 0;font-size:11.5px;font-weight:400;">Estado</span>
<span class="t" style="left:24.45px;top:135.00px;line-height:17px;color:#fff;letter-spacing:0.000px;transform:scaleX(1.2134);transform-origin:0 0;-webkit-text-stroke:0.35px #fff;font-size:12.6px;font-weight:700;">Novo</span>
<span class="t" style="left:117.27px;top:134.90px;line-height:15px;color:#111;letter-spacing:0.000px;transform:scaleX(1.0746);transform-origin:0 0;font-size:11.5px;font-weight:400;">Ocultar filtros</span>
<span class="t" style="left:274.64px;top:135.10px;line-height:15px;color:#333;letter-spacing:0.000px;transform:scaleX(1.0900);transform-origin:0 0;font-size:11.5px;font-weight:400;">1</span>
<span class="t" style="left:297.85px;top:133.90px;line-height:15px;color:#333;letter-spacing:0.000px;transform:scaleX(1.0087);transform-origin:0 0;font-size:11.5px;font-weight:400;">50</span>
<span class="t" style="left:1198.38px;top:134.10px;line-height:15px;color:#333;letter-spacing:0.000px;transform:scaleX(1.0737);transform-origin:0 0;font-size:11.5px;font-weight:400;">Exibindo itens 1 - 19 de 19</span>
<span class="t" style="left:105.88px;top:162.10px;line-height:15px;color:#444;letter-spacing:0.000px;transform:scaleX(0.9641);transform-origin:0 0;font-size:11.5px;font-weight:400;">NCM</span>
<span class="t" style="left:215.33px;top:162.10px;line-height:15px;color:#444;letter-spacing:0.000px;transform:scaleX(1.0170);transform-origin:0 0;font-size:11.5px;font-weight:400;">Descrição</span>
<span class="t" style="left:464.68px;top:162.10px;line-height:15px;color:#444;letter-spacing:0.427px;transform:scaleX(1.0900);transform-origin:0 0;font-size:11.5px;font-weight:400;">IPI (%)</span>
<span class="t" style="left:544.96px;top:162.10px;line-height:15px;color:#444;letter-spacing:0.149px;transform:scaleX(1.0900);transform-origin:0 0;font-size:11.5px;font-weight:400;">PIS (%)</span>
<span class="t" style="left:625.77px;top:162.10px;line-height:15px;color:#444;letter-spacing:0.000px;transform:scaleX(1.0323);transform-origin:0 0;font-size:11.5px;font-weight:400;">COFINS (%)</span>
<span class="t" style="left:705.03px;top:162.10px;line-height:15px;color:#444;letter-spacing:0.000px;transform:scaleX(1.0242);transform-origin:0 0;font-size:11.5px;font-weight:400;">Estado</span>
<span class="t" style="left:774.91px;top:162.10px;line-height:15px;color:#444;letter-spacing:0.000px;transform:scaleX(1.0721);transform-origin:0 0;font-size:11.5px;font-weight:400;">Unidade tributável</span>
<span class="t" style="left:90.92px;top:185.90px;line-height:15px;color:#000;letter-spacing:0.000px;transform:scaleX(1.0461);transform-origin:0 0;font-size:11.5px;font-weight:400;">00000000</span>
<span class="t" style="left:513.51px;top:185.90px;line-height:15px;color:#000;letter-spacing:0.004px;transform:scaleX(1.0900);transform-origin:0 0;font-size:11.5px;font-weight:400;">0%</span>
<span class="t" style="left:705.74px;top:185.90px;line-height:15px;color:#000;letter-spacing:-0.000px;transform:scaleX(1.0198);transform-origin:0 0;font-size:11.5px;font-weight:400;">Aprovada</span>
<span class="t" style="left:90.92px;top:207.90px;line-height:15px;color:#3a3a3a;letter-spacing:0.000px;transform:scaleX(1.0461);transform-origin:0 0;font-size:11.5px;font-weight:400;">00000001</span>
<span class="t" style="left:513.51px;top:207.90px;line-height:15px;color:#3a3a3a;letter-spacing:0.004px;transform:scaleX(1.0900);transform-origin:0 0;font-size:11.5px;font-weight:400;">0%</span>
<span class="t" style="left:705.74px;top:207.90px;line-height:15px;color:#3a3a3a;letter-spacing:-0.000px;transform:scaleX(1.0198);transform-origin:0 0;font-size:11.5px;font-weight:400;">Aprovada</span>
<span class="t" style="left:90.92px;top:228.90px;line-height:15px;color:#3a3a3a;letter-spacing:0.000px;transform:scaleX(1.0461);transform-origin:0 0;font-size:11.5px;font-weight:400;">02085241</span>
<span class="t" style="left:495.54px;top:228.90px;line-height:15px;color:#3a3a3a;letter-spacing:0.122px;transform:scaleX(1.0900);transform-origin:0 0;font-size:11.5px;font-weight:400;">3,65%</span>
<span class="t" style="left:705.74px;top:228.90px;line-height:15px;color:#3a3a3a;letter-spacing:-0.000px;transform:scaleX(1.0198);transform-origin:0 0;font-size:11.5px;font-weight:400;">Aprovada</span>
<span class="t" style="left:90.92px;top:249.90px;line-height:15px;color:#3a3a3a;letter-spacing:0.000px;transform:scaleX(1.0461);transform-origin:0 0;font-size:11.5px;font-weight:400;">05896231</span>
<span class="t" style="left:513.51px;top:249.90px;line-height:15px;color:#3a3a3a;letter-spacing:0.004px;transform:scaleX(1.0900);transform-origin:0 0;font-size:11.5px;font-weight:400;">0%</span>
<span class="t" style="left:705.74px;top:249.90px;line-height:15px;color:#3a3a3a;letter-spacing:-0.000px;transform:scaleX(1.0198);transform-origin:0 0;font-size:11.5px;font-weight:400;">Aprovada</span>
<span class="t" style="left:90.92px;top:270.90px;line-height:15px;color:#3a3a3a;letter-spacing:0.000px;transform:scaleX(1.0461);transform-origin:0 0;font-size:11.5px;font-weight:400;">15110000</span>
<span class="t" style="left:215.89px;top:270.90px;line-height:15px;color:#3a3a3a;letter-spacing:0.000px;transform:scaleX(1.0198);transform-origin:0 0;font-size:11.5px;font-weight:400;">Óleo de palma</span>
<span class="t" style="left:513.51px;top:270.90px;line-height:15px;color:#3a3a3a;letter-spacing:0.004px;transform:scaleX(1.0900);transform-origin:0 0;font-size:11.5px;font-weight:400;">0%</span>
<span class="t" style="left:705.74px;top:270.90px;line-height:15px;color:#3a3a3a;letter-spacing:-0.000px;transform:scaleX(1.0198);transform-origin:0 0;font-size:11.5px;font-weight:400;">Aprovada</span>
<span class="t" style="left:90.92px;top:292.90px;line-height:15px;color:#3a3a3a;letter-spacing:0.000px;transform:scaleX(1.0461);transform-origin:0 0;font-size:11.5px;font-weight:400;">16023290</span>
<span class="t" style="left:216.02px;top:292.90px;line-height:15px;color:#3a3a3a;letter-spacing:0.000px;transform:scaleX(1.0461);transform-origin:0 0;font-size:11.5px;font-weight:400;">16023290</span>
<span class="t" style="left:513.51px;top:292.90px;line-height:15px;color:#3a3a3a;letter-spacing:0.004px;transform:scaleX(1.0900);transform-origin:0 0;font-size:11.5px;font-weight:400;">0%</span>
<span class="t" style="left:705.74px;top:292.90px;line-height:15px;color:#3a3a3a;letter-spacing:-0.000px;transform:scaleX(1.0198);transform-origin:0 0;font-size:11.5px;font-weight:400;">Aprovada</span>
<span class="t" style="left:90.92px;top:313.90px;line-height:15px;color:#3a3a3a;letter-spacing:0.000px;transform:scaleX(1.0461);transform-origin:0 0;font-size:11.5px;font-weight:400;">21069030</span>
<span class="t" style="left:513.51px;top:313.90px;line-height:15px;color:#3a3a3a;letter-spacing:0.004px;transform:scaleX(1.0900);transform-origin:0 0;font-size:11.5px;font-weight:400;">0%</span>
<span class="t" style="left:705.74px;top:313.90px;line-height:15px;color:#3a3a3a;letter-spacing:-0.000px;transform:scaleX(1.0198);transform-origin:0 0;font-size:11.5px;font-weight:400;">Aprovada</span>
<span class="t" style="left:90.92px;top:334.90px;line-height:15px;color:#3a3a3a;letter-spacing:0.000px;transform:scaleX(1.0461);transform-origin:0 0;font-size:11.5px;font-weight:400;">34011190</span>
<span class="t" style="left:216.02px;top:334.90px;line-height:15px;color:#3a3a3a;letter-spacing:0.000px;transform:scaleX(1.0461);transform-origin:0 0;font-size:11.5px;font-weight:400;">34011190</span>
<span class="t" style="left:513.51px;top:334.90px;line-height:15px;color:#3a3a3a;letter-spacing:0.004px;transform:scaleX(1.0900);transform-origin:0 0;font-size:11.5px;font-weight:400;">0%</span>
<span class="t" style="left:705.74px;top:334.90px;line-height:15px;color:#3a3a3a;letter-spacing:-0.000px;transform:scaleX(1.0198);transform-origin:0 0;font-size:11.5px;font-weight:400;">Aprovada</span>
<span class="t" style="left:90.92px;top:356.90px;line-height:15px;color:#000;letter-spacing:0.000px;transform:scaleX(1.0461);transform-origin:0 0;font-size:11.5px;font-weight:400;">44111900</span>
<span class="t" style="left:215.88px;top:356.90px;line-height:15px;color:#000;letter-spacing:-0.000px;transform:scaleX(1.0508);transform-origin:0 0;font-size:11.5px;font-weight:400;">Outros painéis de fibras de madeira.</span>
<span class="t" style="left:495.71px;top:356.90px;line-height:15px;color:#000;letter-spacing:0.083px;transform:scaleX(1.0900);transform-origin:0 0;font-size:11.5px;font-weight:400;">4,75%</span>
<span class="t" style="left:705.74px;top:356.90px;line-height:15px;color:#000;letter-spacing:-0.000px;transform:scaleX(1.0198);transform-origin:0 0;font-size:11.5px;font-weight:400;">Aprovada</span>
<span class="t" style="left:90.92px;top:377.90px;line-height:15px;color:#3a3a3a;letter-spacing:0.000px;transform:scaleX(1.0461);transform-origin:0 0;font-size:11.5px;font-weight:400;">44152000</span>
<span class="t" style="left:216.02px;top:377.90px;line-height:15px;color:#3a3a3a;letter-spacing:0.000px;transform:scaleX(1.0461);transform-origin:0 0;font-size:11.5px;font-weight:400;">44152000</span>
<span class="t" style="left:513.51px;top:377.90px;line-height:15px;color:#3a3a3a;letter-spacing:0.004px;transform:scaleX(1.0900);transform-origin:0 0;font-size:11.5px;font-weight:400;">0%</span>
<span class="t" style="left:705.74px;top:377.90px;line-height:15px;color:#3a3a3a;letter-spacing:-0.000px;transform:scaleX(1.0198);transform-origin:0 0;font-size:11.5px;font-weight:400;">Aprovada</span>
<span class="t" style="left:90.92px;top:398.90px;line-height:15px;color:#3a3a3a;letter-spacing:0.000px;transform:scaleX(1.0461);transform-origin:0 0;font-size:11.5px;font-weight:400;">54050000</span>
<span class="t" style="left:216.02px;top:398.90px;line-height:15px;color:#3a3a3a;letter-spacing:0.000px;transform:scaleX(1.0461);transform-origin:0 0;font-size:11.5px;font-weight:400;">54050000</span>
<span class="t" style="left:513.51px;top:398.90px;line-height:15px;color:#3a3a3a;letter-spacing:0.004px;transform:scaleX(1.0900);transform-origin:0 0;font-size:11.5px;font-weight:400;">0%</span>
<span class="t" style="left:705.74px;top:398.90px;line-height:15px;color:#3a3a3a;letter-spacing:-0.000px;transform:scaleX(1.0198);transform-origin:0 0;font-size:11.5px;font-weight:400;">Aprovada</span>
<span class="t" style="left:90.92px;top:420.90px;line-height:15px;color:#3a3a3a;letter-spacing:0.000px;transform:scaleX(1.0461);transform-origin:0 0;font-size:11.5px;font-weight:400;">73142000</span>
<span class="t" style="left:216.02px;top:420.90px;line-height:15px;color:#3a3a3a;letter-spacing:0.000px;transform:scaleX(1.0461);transform-origin:0 0;font-size:11.5px;font-weight:400;">73142000</span>
<span class="t" style="left:513.51px;top:420.90px;line-height:15px;color:#3a3a3a;letter-spacing:0.004px;transform:scaleX(1.0900);transform-origin:0 0;font-size:11.5px;font-weight:400;">0%</span>
<span class="t" style="left:705.74px;top:420.90px;line-height:15px;color:#3a3a3a;letter-spacing:-0.000px;transform:scaleX(1.0198);transform-origin:0 0;font-size:11.5px;font-weight:400;">Aprovada</span>
<span class="t" style="left:90.92px;top:441.90px;line-height:15px;color:#3a3a3a;letter-spacing:0.000px;transform:scaleX(1.0461);transform-origin:0 0;font-size:11.5px;font-weight:400;">73182900</span>
<span class="t" style="left:513.51px;top:441.90px;line-height:15px;color:#3a3a3a;letter-spacing:0.004px;transform:scaleX(1.0900);transform-origin:0 0;font-size:11.5px;font-weight:400;">0%</span>
<span class="t" style="left:705.74px;top:441.90px;line-height:15px;color:#3a3a3a;letter-spacing:-0.000px;transform:scaleX(1.0198);transform-origin:0 0;font-size:11.5px;font-weight:400;">Aprovada</span>
<span class="t" style="left:775.89px;top:441.90px;line-height:15px;color:#3a3a3a;letter-spacing:0.000px;transform:scaleX(1.0575);transform-origin:0 0;font-size:11.5px;font-weight:400;">kg</span>
<span class="t" style="left:90.92px;top:462.90px;line-height:15px;color:#3a3a3a;letter-spacing:0.000px;transform:scaleX(1.0461);transform-origin:0 0;font-size:11.5px;font-weight:400;">84194010</span>
<span class="t" style="left:216.02px;top:462.90px;line-height:15px;color:#3a3a3a;letter-spacing:0.000px;transform:scaleX(1.0461);transform-origin:0 0;font-size:11.5px;font-weight:400;">84194010</span>
<span class="t" style="left:513.51px;top:462.90px;line-height:15px;color:#3a3a3a;letter-spacing:0.004px;transform:scaleX(1.0900);transform-origin:0 0;font-size:11.5px;font-weight:400;">0%</span>
<span class="t" style="left:705.74px;top:462.90px;line-height:15px;color:#3a3a3a;letter-spacing:-0.000px;transform:scaleX(1.0198);transform-origin:0 0;font-size:11.5px;font-weight:400;">Aprovada</span>
<span class="t" style="left:90.92px;top:484.90px;line-height:15px;color:#3a3a3a;letter-spacing:0.000px;transform:scaleX(1.0461);transform-origin:0 0;font-size:11.5px;font-weight:400;">84779000</span>
<span class="t" style="left:216.02px;top:484.90px;line-height:15px;color:#3a3a3a;letter-spacing:0.000px;transform:scaleX(1.0461);transform-origin:0 0;font-size:11.5px;font-weight:400;">84779000</span>
<span class="t" style="left:513.51px;top:484.90px;line-height:15px;color:#3a3a3a;letter-spacing:0.004px;transform:scaleX(1.0900);transform-origin:0 0;font-size:11.5px;font-weight:400;">0%</span>
<span class="t" style="left:705.74px;top:484.90px;line-height:15px;color:#3a3a3a;letter-spacing:-0.000px;transform:scaleX(1.0198);transform-origin:0 0;font-size:11.5px;font-weight:400;">Aprovada</span>
<span class="t" style="left:90.92px;top:505.90px;line-height:15px;color:#3a3a3a;letter-spacing:0.000px;transform:scaleX(1.0461);transform-origin:0 0;font-size:11.5px;font-weight:400;">85023900</span>
<span class="t" style="left:513.51px;top:505.90px;line-height:15px;color:#3a3a3a;letter-spacing:0.004px;transform:scaleX(1.0900);transform-origin:0 0;font-size:11.5px;font-weight:400;">0%</span>
<span class="t" style="left:705.74px;top:505.90px;line-height:15px;color:#3a3a3a;letter-spacing:-0.000px;transform:scaleX(1.0198);transform-origin:0 0;font-size:11.5px;font-weight:400;">Aprovada</span>
<span class="t" style="left:90.92px;top:526.90px;line-height:15px;color:#3a3a3a;letter-spacing:0.000px;transform:scaleX(1.0461);transform-origin:0 0;font-size:11.5px;font-weight:400;">90031100</span>
<span class="t" style="left:216.02px;top:526.90px;line-height:15px;color:#3a3a3a;letter-spacing:0.000px;transform:scaleX(1.0461);transform-origin:0 0;font-size:11.5px;font-weight:400;">90031100</span>
<span class="t" style="left:513.51px;top:526.90px;line-height:15px;color:#3a3a3a;letter-spacing:0.004px;transform:scaleX(1.0900);transform-origin:0 0;font-size:11.5px;font-weight:400;">0%</span>
<span class="t" style="left:705.74px;top:526.90px;line-height:15px;color:#3a3a3a;letter-spacing:-0.000px;transform:scaleX(1.0198);transform-origin:0 0;font-size:11.5px;font-weight:400;">Aprovada</span>
<span class="t" style="left:90.92px;top:548.90px;line-height:15px;color:#3a3a3a;letter-spacing:0.000px;transform:scaleX(1.0461);transform-origin:0 0;font-size:11.5px;font-weight:400;">90041000</span>
<span class="t" style="left:216.02px;top:548.90px;line-height:15px;color:#3a3a3a;letter-spacing:0.000px;transform:scaleX(1.0461);transform-origin:0 0;font-size:11.5px;font-weight:400;">90041000</span>
<span class="t" style="left:513.51px;top:548.90px;line-height:15px;color:#3a3a3a;letter-spacing:0.004px;transform:scaleX(1.0900);transform-origin:0 0;font-size:11.5px;font-weight:400;">0%</span>
<span class="t" style="left:705.74px;top:548.90px;line-height:15px;color:#3a3a3a;letter-spacing:-0.000px;transform:scaleX(1.0198);transform-origin:0 0;font-size:11.5px;font-weight:400;">Aprovada</span>
<span class="t" style="left:775.89px;top:548.90px;line-height:15px;color:#3a3a3a;letter-spacing:0.000px;transform:scaleX(1.0575);transform-origin:0 0;font-size:11.5px;font-weight:400;">kg</span>
<span class="t" style="left:90.92px;top:569.90px;line-height:15px;color:#3a3a3a;letter-spacing:0.000px;transform:scaleX(1.0461);transform-origin:0 0;font-size:11.5px;font-weight:400;">90303390</span>
<span class="t" style="left:216.02px;top:569.90px;line-height:15px;color:#3a3a3a;letter-spacing:0.000px;transform:scaleX(1.0461);transform-origin:0 0;font-size:11.5px;font-weight:400;">90303390</span>
<span class="t" style="left:513.51px;top:569.90px;line-height:15px;color:#3a3a3a;letter-spacing:0.004px;transform:scaleX(1.0900);transform-origin:0 0;font-size:11.5px;font-weight:400;">0%</span>
<span class="t" style="left:705.74px;top:569.90px;line-height:15px;color:#3a3a3a;letter-spacing:-0.000px;transform:scaleX(1.0198);transform-origin:0 0;font-size:11.5px;font-weight:400;">Aprovada</span>
</body></html>
